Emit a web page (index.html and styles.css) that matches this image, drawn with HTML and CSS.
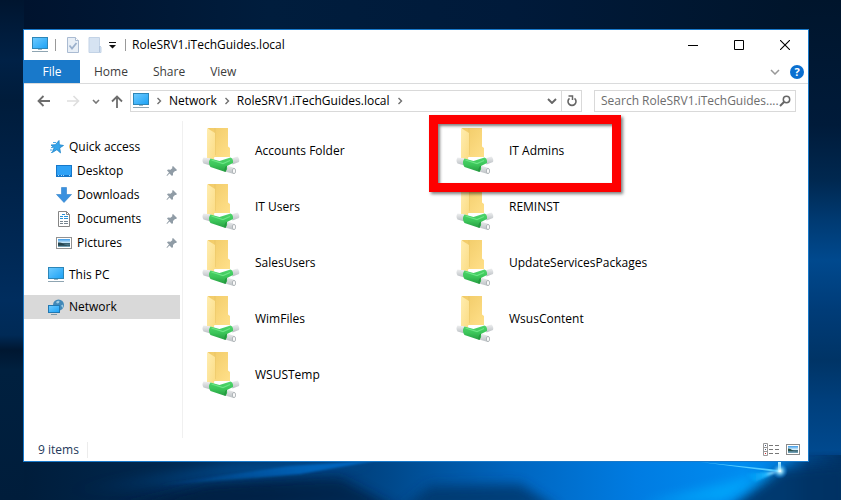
FILE: index.html
```html
<!DOCTYPE html>
<html lang="en">
<head>
<meta charset="utf-8">
<title>RoleSRV1.iTechGuides.local</title>
<link rel="stylesheet" href="styles.css">
</head>
<body>
<svg class="wallpaper" viewBox="0 0 841 500" preserveAspectRatio="none" aria-hidden="true">
  <defs>
    <linearGradient id="w-base" x1="0" y1="0" x2="0" y2="1">
      <stop offset="0" stop-color="#00152f"/><stop offset=".12" stop-color="#002146"/><stop offset=".2" stop-color="#001c3b"/><stop offset=".4" stop-color="#00244c"/><stop offset=".6" stop-color="#002d5e"/><stop offset=".67" stop-color="#002a56"/><stop offset=".7" stop-color="#001731"/><stop offset=".74" stop-color="#00203f"/><stop offset="1" stop-color="#001d3b"/>
    </linearGradient>
    <linearGradient id="w-side" x1="0" y1="0" x2="0" y2="1">
      <stop offset="0" stop-color="#00152c"/><stop offset=".25" stop-color="#001b3a"/><stop offset=".36" stop-color="#002850"/><stop offset=".44" stop-color="#003a72"/><stop offset=".52" stop-color="#00498e"/><stop offset=".62" stop-color="#003c78"/><stop offset=".72" stop-color="#003466"/><stop offset=".8" stop-color="#003f7c"/><stop offset=".9" stop-color="#00498e"/><stop offset=".95" stop-color="#003668"/><stop offset="1" stop-color="#003060"/>
    </linearGradient>
    <linearGradient id="w-floor" x1="0" y1="0" x2="1" y2="0">
      <stop offset="0" stop-color="#001d3b"/><stop offset=".08" stop-color="#002244"/><stop offset=".3" stop-color="#00305f"/><stop offset=".45" stop-color="#00498c"/><stop offset=".6" stop-color="#0066c0"/><stop offset=".75" stop-color="#007ce2"/><stop offset=".88" stop-color="#008cf0"/><stop offset=".93" stop-color="#0080e0"/><stop offset=".96" stop-color="#004484"/><stop offset="1" stop-color="#003468"/>
    </linearGradient>
    <linearGradient id="w-top" x1="0" y1="0" x2="1" y2="0">
      <stop offset="0" stop-color="#00132e"/><stop offset=".3" stop-color="#001d3d"/><stop offset=".6" stop-color="#001a3a"/><stop offset="1" stop-color="#001429"/>
    </linearGradient>
    <linearGradient id="w-ray" x1="0" x2="1" y1="0" y2="0">
      <stop offset="0" stop-color="#0058a8" stop-opacity="0"/><stop offset=".7" stop-color="#0062b8"/><stop offset="1" stop-color="#0068c4"/>
    </linearGradient>
    <linearGradient id="w-flare" x1="0" x2="1" y1="0" y2="0">
      <stop offset="0" stop-color="#00aaff" stop-opacity="0"/><stop offset=".6" stop-color="#18b4ff"/><stop offset="1" stop-color="#ffffff"/>
    </linearGradient>
    <radialGradient id="w-star"><stop offset="0" stop-color="#fff"/><stop offset=".3" stop-color="#a0e8ff" stop-opacity=".8"/><stop offset="1" stop-color="#0090ff" stop-opacity="0"/></radialGradient>
    <filter id="w-soft" x="-20%" y="-50%" width="140%" height="200%"><feGaussianBlur stdDeviation="6"/></filter>
    <filter id="w-fine" x="-20%" y="-50%" width="140%" height="200%"><feGaussianBlur stdDeviation="1"/></filter>
  </defs>
  <rect width="841" height="500" fill="url(#w-base)"/>
  <rect x="24" width="817" height="40" fill="url(#w-top)"/>
  <rect x="800" width="41" height="500" fill="url(#w-side)"/>
  <rect y="455" x="24" width="817" height="45" fill="url(#w-floor)"/>
  <path d="M110 510L210 484L340 478L400 510Z" fill="#001d3e" opacity=".7" filter="url(#w-soft)"/>
  <path d="M400 510L430 486L520 484L560 510Z" fill="#003468" opacity=".8" filter="url(#w-soft)"/>
  <path d="M780 468L850 462V520H715L745 496Z" fill="#003264" opacity=".9" filter="url(#w-soft)"/>
  <path d="M60 492L230 462H370L270 475L180 484Z" fill="url(#w-ray)" filter="url(#w-soft)" opacity=".6"/>
  <path d="M150 486L290 466L380 460L300 474Z" fill="url(#w-ray)" filter="url(#w-fine)"/>
  <path d="M640 505L779 471L725 500Z" fill="#00b0ff" opacity=".75" filter="url(#w-soft)"/>
  <path d="M745 474L779 471L755 482Z" fill="url(#w-flare)" filter="url(#w-fine)"/>
  <path d="M700 462L778 470V472Z" fill="#54ccff"/>
  <path d="M778 460h3v12h-3z" fill="#a8e8ff"/>
  <circle cx="780" cy="471" r="8" fill="url(#w-star)"/>
</svg>

<svg width="0" height="0" class="sprites" aria-hidden="true">
  <defs>
    <linearGradient id="g-screen" x1="0" y1="0" x2="1" y2="1"><stop offset="0" stop-color="#6fcbff"/><stop offset="1" stop-color="#1ba1f5"/></linearGradient>
    <linearGradient id="g-front" x1="0" y1="0" x2="1" y2="1"><stop offset="0" stop-color="#ffedb0"/><stop offset="1" stop-color="#fbdc84"/></linearGradient>
    <linearGradient id="g-back" x1="0" y1="0" x2="1" y2="1"><stop offset="0" stop-color="#f1ca66"/><stop offset="1" stop-color="#ffe08a"/></linearGradient>
    <linearGradient id="g-pic" x1="0" y1="0" x2="0" y2="1"><stop offset="0" stop-color="#3d9be8"/><stop offset=".5" stop-color="#d6eefa"/><stop offset=".55" stop-color="#355f70"/><stop offset="1" stop-color="#7aa9bf"/></linearGradient>
    <linearGradient id="g-tube" x1="0" y1="0" x2="0" y2="1"><stop offset="0" stop-color="#eeeff0"/><stop offset="1" stop-color="#b9bec2"/></linearGradient>
    <linearGradient id="g-green" x1="0" y1="0" x2="0" y2="1"><stop offset="0" stop-color="#4fd56c"/><stop offset=".5" stop-color="#3cc65a"/><stop offset="1" stop-color="#259c40"/></linearGradient>
    <symbol id="pc" viewBox="0 0 16 16">
      <rect x=".5" y=".5" width="15" height="11" fill="url(#g-screen)" stroke="#2c86b8"/>
      <path d="M6 12h4v1H6z" fill="#9ab4c2"/><path d="M0 14h16v1H0z" fill="#8fa5b2"/>
    </symbol>
    <symbol id="pin" viewBox="0 0 12 12">
      <path d="M7 1l4 4-1 1-1 0-2 2 0 2-1 1-2.500-2.500L1 11 .5 10.500 3 7.500 1 5.500l1-1 2.500.2L6.500 3 6 2z" fill="#909ca6"/>
    </symbol>
    <symbol id="folder" viewBox="0 0 48 48">
      <path d="M10 1h20v18.500l2 1.500v9H16z" fill="url(#g-back)"/>
      <path d="M17 1v27" stroke="#e9c566" stroke-width="1"/>
      <path d="M9 1l8 5v22l-1.500 5L9 31z" fill="url(#g-front)"/>
      <path d="M17 30h17v4l-8 4z" fill="#fff"/>
      <path d="M5.500 30.500l8 1-1 7-7-2q-2-3 0-6z" fill="url(#g-tube)"/>
      <path d="M33 31.500l6.500-2q2.500 2.500 1.500 5.500l-6.500 2.500z" fill="url(#g-tube)"/>
      <path d="M27.500 38L36.500 41q1.500 3-.5 6L27 44.500z" fill="url(#g-tube)"/>
      <ellipse cx="36" cy="44" rx="1.600" ry="2.700" fill="#fafafa" stroke="#a5abaf" stroke-width=".8"/>
      <path d="M12.500 31.500L21.500 34l11-3.500q3 1 2.500 5.500l-6 3q1 3-1.500 6L12.500 40q-3-4.500 0-8.500z" fill="url(#g-green)"/>
      <path d="M13.500 33l11.500 3.500 7-3" fill="none" stroke="#6be585" stroke-width="1.200"/>
      <path d="M28.500 39q-2 3-1.500 5.500" fill="none" stroke="#1c8a35" stroke-width=".8"/>
    </symbol>
    <symbol id="chev" viewBox="0 0 6 8"><path d="M1.500 1l3 3-3 3" fill="none" stroke="#6f6f6f" stroke-width="1.400"/></symbol>
    <symbol id="chev-down" viewBox="0 0 10 6"><path d="M1 1l4 4 4-4" fill="none" stroke="currentColor" stroke-width="1.500"/></symbol>
  </defs>
</svg>

<main class="window">
  <header class="titlebar">
    <svg class="i16" aria-hidden="true"><use href="#pc"/></svg>
    <span class="bar"></span>
    <button class="tool" aria-label="Properties"><svg width="14" height="16" viewBox="0 0 14 16"><path d="M1.500.5h8l3 3v12h-11z" fill="#e8eff7" stroke="#aabbd2"/><path d="M9.500.5v3h3" fill="#fff" stroke="#aabbd2"/><path d="M3.500 8.500l2.500 3 4.500-5.500" fill="none" stroke="#9bb0cc" stroke-width="1.800"/></svg></button>
    <button class="tool" aria-label="New folder"><svg width="14" height="16" viewBox="0 0 14 16"><path d="M1 .5h10.500v8l1.500 1.500v5.500H1z" fill="#d6e3f2" stroke="#c3d3e6"/><path d="M11.500 9v6" stroke="#b4c6dd"/></svg></button>
    <button class="tool tool-menu" aria-label="Customize Quick Access Toolbar"><svg width="7" height="7" viewBox="0 0 7 7"><path d="M0 0h7v1H0zM0 3h7L3.500 6.500z" fill="#111"/></svg></button>
    <span class="bar"></span>
    <h1 class="title">RoleSRV1.iTechGuides.local</h1>
    <div class="controls">
      <button aria-label="Minimize"><svg width="10" height="10" viewBox="0 0 10 10"><path d="M0 5h10v1H0z"/></svg></button>
      <button aria-label="Maximize"><svg width="10" height="10" viewBox="0 0 10 10"><path d="M.5.5h9v9h-9z" fill="none" stroke="#000"/></svg></button>
      <button aria-label="Close"><svg width="10" height="10" viewBox="0 0 10 10"><path d="M0 0l10 10M10 0L0 10" stroke="#000" stroke-width="1.100"/></svg></button>
    </div>
  </header>

  <nav class="ribbon" aria-label="Ribbon">
    <button class="tab tab-file">File</button>
    <button class="tab">Home</button>
    <button class="tab">Share</button>
    <button class="tab">View</button>
    <div class="ribbon-end">
      <button class="expand" aria-label="Expand the ribbon"><svg width="10" height="6"><use href="#chev-down"/></svg></button>
      <button class="help" aria-label="Help">?</button>
    </div>
  </nav>

  <div class="address-row">
    <button class="nav-back" aria-label="Back"><svg width="13" height="12" viewBox="0 0 13 12"><path d="M1.500 6H13M6.500 1l-5 5 5 5" fill="none" stroke="#6d6d6d" stroke-width="1.800"/></svg></button>
    <button class="nav-forward" aria-label="Forward"><svg width="13" height="12" viewBox="0 0 13 12"><path d="M0 6h11.500M6.500 1l5 5-5 5" fill="none" stroke="#dedede" stroke-width="1.600"/></svg></button>
    <button class="nav-recent" aria-label="Recent locations"><svg width="8" height="5" viewBox="0 0 8 5"><path d="M1 1l3 3 3-3" fill="none" stroke="#777" stroke-width="1.600"/></svg></button>
    <button class="nav-up" aria-label="Up"><svg width="12" height="13" viewBox="0 0 12 13"><path d="M6 1.500V13M1 6.500l5-5 5 5" fill="none" stroke="#6d6d6d" stroke-width="1.800"/></svg></button>
    <div class="path">
      <svg class="i16" aria-hidden="true"><use href="#pc"/></svg>
      <svg class="sep" aria-hidden="true"><use href="#chev"/></svg>
      <a href="#network">Network</a>
      <svg class="sep" aria-hidden="true"><use href="#chev"/></svg>
      <a href="#server">RoleSRV1.iTechGuides.local</a>
      <svg class="sep" aria-hidden="true"><use href="#chev"/></svg>
      <button class="path-menu" aria-label="Previous locations"><svg width="10" height="6" viewBox="0 0 10 6"><path d="M1 1l4 4 4-4" fill="none" stroke="#666" stroke-width="1.900"/></svg></button>
      <button class="refresh" aria-label="Refresh"><svg width="12" height="12" viewBox="0 0 12 12"><path d="M8.500 3.300a4 4 0 1 1-5 0" fill="none" stroke="#666" stroke-width="1.600"/><path d="M2.500 1h4v4" fill="none" stroke="#666" stroke-width="1.500"/></svg></button>
    </div>
    <form class="search">
      <input type="text" aria-label="Search" placeholder="Search RoleSRV1.iTechGuides....">
      <svg width="12" height="12" viewBox="0 0 12 12" aria-hidden="true"><circle cx="7.500" cy="4.500" r="3.200" fill="none" stroke="#666" stroke-width="1.500"/><path d="M5 7L1 11" stroke="#666" stroke-width="1.900"/></svg>
    </form>
  </div>

  <div class="body">
    <nav class="sidebar" aria-label="Navigation pane">
      <a class="row" href="#quick"><svg class="i16" viewBox="0 0 16 16"><path d="M11 1.500l.3 4.200 4.200.8-3.800 2.400.8 5-3.600-3.200-4.600 2.800 1.800-4.700L3 6l4.300-.3z" fill="#36a5ea" stroke="#1d83c9" stroke-width=".8"/><path d="M5 3.500h3M3 8.500h2M2 11h2.500M3 13.500h1.500" stroke="#4ba8e4"/></svg>Quick access</a>
      <a class="row sub" href="#desktop"><svg class="i16" viewBox="0 0 16 16"><rect x=".5" y="2.500" width="15" height="11" fill="#2fa2f6" stroke="#1678ca"/><path d="M1 12.500h14" stroke="#1674c8"/><path d="M2 12.500h1M5 12.500h1M7 12.500h1M13 12.500h1" stroke="#a8d8fa"/></svg>Desktop<svg class="pin"><use href="#pin"/></svg></a>
      <a class="row sub" href="#downloads"><svg class="i16" viewBox="0 0 16 16"><path d="M5.500.5h5v7h5L8 15.500.5 7.500h5z" fill="#3a91df" stroke="#2e7fca" stroke-width=".6"/></svg>Downloads<svg class="pin"><use href="#pin"/></svg></a>
      <a class="row sub" href="#documents"><svg class="i16" viewBox="0 0 16 16"><path d="M2.500.5h8l3 3v12h-11z" fill="#fff" stroke="#858585"/><path d="M10.500.5v3h3" fill="none" stroke="#858585"/><path d="M4 5.500h3M8 5.500h4M4 7.500h3M8 7.500h4M6 3.500h3" stroke="#2792d8"/><path d="M4 10.500h3M8 10.500h4M4 12.500h3M8 12.500h4" stroke="#778590"/></svg>Documents<svg class="pin"><use href="#pin"/></svg></a>
      <a class="row sub" href="#pictures"><svg class="i16" viewBox="0 0 16 16"><rect x=".5" y="2.500" width="15" height="11" fill="#fff" stroke="#929292"/><rect x="2" y="4" width="12" height="8" fill="url(#g-pic)"/><path d="M2 7.500q3-.5 5 1.300t7 1.200v.8H2z" fill="#27454f"/></svg>Pictures<svg class="pin"><use href="#pin"/></svg></a>
      <a class="row spaced" href="#pc-root"><svg class="i16"><use href="#pc"/></svg>This PC</a>
      <a class="row spaced selected" href="#network" aria-current="page"><svg class="i16" viewBox="0 0 16 16"><circle cx="10.500" cy="6" r="5.500" fill="#4188b8"/><path d="M8 3q2-2 3.500-1L11 4 9 4.500zM13 6.500l2-1q.5 2-.5 3.500z" fill="#9ccbe4"/><rect x=".5" y="6.500" width="11" height="7" fill="url(#g-screen)" stroke="#2178b2"/><path d="M3 15.500h6" stroke="#7c97a7"/></svg>Network</a>
    </nav>

    <section class="files" aria-label="Shared folders">
      <a class="tile" href="#f1"><svg class="folder"><use href="#folder"/></svg>Accounts Folder</a>
      <a class="tile" href="#f2"><svg class="folder"><use href="#folder"/></svg>IT Admins<span class="callout"></span></a>
      <a class="tile" href="#f3"><svg class="folder"><use href="#folder"/></svg>IT Users</a>
      <a class="tile" href="#f4"><svg class="folder"><use href="#folder"/></svg>REMINST</a>
      <a class="tile" href="#f5"><svg class="folder"><use href="#folder"/></svg>SalesUsers</a>
      <a class="tile" href="#f6"><svg class="folder"><use href="#folder"/></svg>UpdateServicesPackages</a>
      <a class="tile" href="#f7"><svg class="folder"><use href="#folder"/></svg>WimFiles</a>
      <a class="tile" href="#f8"><svg class="folder"><use href="#folder"/></svg>WsusContent</a>
      <a class="tile" href="#f9"><svg class="folder"><use href="#folder"/></svg>WSUSTemp</a>
    </section>
  </div>

  <footer class="status">
    <span class="count">9 items</span>
    <div class="views">
      <button aria-label="Details view"><svg width="16" height="13" viewBox="0 0 16 13"><path d="M.5.5h4v12h-4zM.5 4.500h4M.5 8.500h4" fill="#fff" stroke="#999"/><path d="M2 2h1v1H2zM2 6h1v1H2z" fill="#457"/><path d="M2 10h1v1H2z" fill="#d22"/><path d="M6 2.500h4M12 2.500h4M6 6.500h4M12 6.500h4M6 10.500h4M12 10.500h4" stroke="#777"/></svg></button>
      <button aria-label="Large icons view"><svg width="14" height="11" viewBox="0 0 14 11"><rect x=".5" y=".5" width="13" height="10" fill="#fff" stroke="#8b8b8b"/><rect x="2" y="2" width="10" height="7" fill="url(#g-pic)"/><path d="M2 4.500q3 0 4 1.500t6 1H2z" fill="#2d5348"/></svg></button>
    </div>
  </footer>
</main>
</body>
</html>
```
FILE: styles.css
```css
* { box-sizing: border-box; }

body {
  margin: 0;
  min-height: 100vh;
  padding: 29px 32px 38px 23px;
  display: flex;
  background: #001c3b;
  font-family: "Open Sans", "Noto Sans", sans-serif;
  font-size: 12px;
  line-height: 16px;
  color: #000;
}

svg { display: block; flex: none; }
a { color: inherit; text-decoration: none; }

button {
  display: flex;
  align-items: center;
  justify-content: center;
  margin: 0;
  padding: 0;
  border: 0;
  background: none;
  font: inherit;
  color: #666;
}

.wallpaper {
  position: fixed;
  inset: 0;
  z-index: -1;
  width: 100%;
  height: 100%;
}

.sprites { position: absolute; }
.i16 { width: 16px; height: 16px; }

.window {
  flex: 1;
  display: flex;
  flex-direction: column;
  min-width: 0;
  border: 1px solid #1979ca;
  background: #fff;
}

.titlebar {
  display: flex;
  align-items: center;
  height: 30px;
  padding-left: 8px;
}

.bar {
  width: 1px;
  height: 12px;
  margin: 0 6px 0 7px;
  background: #999;
}

.tool { width: 22px; }
.tool-menu { width: 12px; }

.title {
  margin: 0;
  font-size: 12px;
  font-weight: 400;
}

.controls {
  display: flex;
  margin-left: auto;
}

.controls button { width: 46px; height: 28px; }

.ribbon {
  display: flex;
  height: 24px;
  border-bottom: 1px solid #dadbdc;
}

.tab {
  padding: 0 12px;
  margin-right: 1px;
  color: #3c3c3c;
}

.tab-file {
  width: 56px;
  margin-right: 2px;
  background: #1979ca;
  color: #fff;
}

.ribbon-end {
  display: flex;
  align-items: center;
  gap: 10px;
  margin-left: auto;
  padding-right: 4px;
}

.expand { color: #999; }

.help {
  width: 14px;
  height: 14px;
  border-radius: 50%;
  background: #0a6fd0;
  color: #fff;
  font-size: 11px;
  font-weight: 700;
}

.address-row {
  display: flex;
  align-items: center;
  padding: 6px 12px 0;
}

.nav-back { width: 14px; }
.nav-forward { width: 14px; margin-left: 16px; }
.nav-recent { width: 8px; margin-left: 12px; }
.nav-up { width: 13px; margin-left: 10px; }

.path {
  flex: 1;
  display: flex;
  align-items: center;
  height: 22px;
  margin-left: 7px;
  padding-left: 2px;
  border: 1px solid #d9d9d9;
}

.sep { width: 6px; height: 8px; margin: 0 7px; }
.path-menu { width: 19px; margin-left: auto; }

.refresh {
  width: 20px;
  height: 20px;
  border-left: 1px solid #d9d9d9;
}

.search {
  display: flex;
  align-items: center;
  width: 202px;
  height: 22px;
  margin-left: 12px;
  padding: 0 4px 0 6px;
  border: 1px solid #d9d9d9;
}

.search input {
  flex: 1;
  min-width: 0;
  padding: 0;
  border: 0;
  outline: 0;
  background: none;
  font: inherit;
}

.search input::placeholder { color: #6d6d6d; opacity: 1; }

.body {
  flex: 1;
  display: flex;
  padding-top: 9px;
}

.sidebar {
  width: 159px;
  padding: 14px 2px 0 0;
  border-right: 1px solid #f0f0f0;
}

.row {
  display: flex;
  align-items: center;
  gap: 5px;
  height: 24px;
  padding-left: 24px;
}

.sub { padding-left: 32px; }
.spaced { margin-top: 8px; }
.selected { background: #d9d9d9; }
.pin { width: 12px; height: 12px; margin: 0 2px 0 auto; }

.files {
  flex: 1;
  display: grid;
  grid-template-columns: repeat(auto-fill, 254px);
  grid-auto-rows: 56px;
  align-content: start;
  padding: 2px 0 0 15px;
}

.tile {
  position: relative;
  display: flex;
  align-items: center;
  gap: 9px;
}

.folder { width: 48px; height: 48px; }

.callout {
  position: absolute;
  z-index: 1;
  top: -8px;
  left: -23px;
  width: 192px;
  height: 77px;
  border: 9px solid #fe0000;
  box-shadow: 2px 2px 3px rgba(0, 0, 0, .5), inset 2px 2px 3px rgba(0, 0, 0, .5);
}

.status {
  display: flex;
  align-items: center;
  justify-content: space-between;
  height: 23px;
  padding: 0 8px 0 14px;
  color: #1e395b;
}

.count {
  padding-right: 8px;
  border-right: 1px solid #ececec;
}

.views {
  display: flex;
  align-items: center;
  gap: 7px;
}
```
